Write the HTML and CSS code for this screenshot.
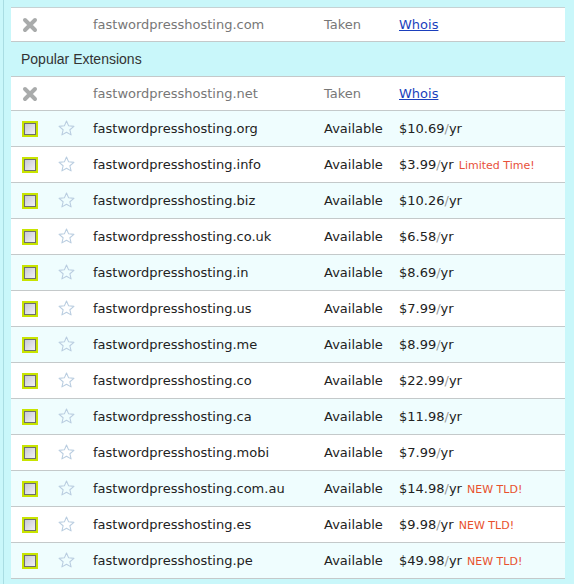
FILE: index.html
```html
<!DOCTYPE html>
<html lang="en">
<head>
  <meta charset="UTF-8">
  <title>Domain Results</title>
  <link rel="stylesheet" href="styles.css">
</head>
<body>
  <div class="frame">
    <table class="results">
      <tbody id="mainRows">
        <tr class="taken first">
          <td class="c-icon"><svg class="x-icon" viewBox="0 0 16 16"><path d="M3 3 L13 13 M13 3 L3 13"/></svg></td>
          <td class="c-star"></td>
          <td class="c-domain">fastwordpresshosting.com</td>
          <td class="c-status">Taken</td>
          <td class="c-price"><a href="#">Whois</a></td>
        </tr>
        <tr class="group">
          <td colspan="5">Popular Extensions</td>
        </tr>
        <tr class="taken second">
          <td class="c-icon"><svg class="x-icon" viewBox="0 0 16 16"><path d="M3 3 L13 13 M13 3 L3 13"/></svg></td>
          <td class="c-star"></td>
          <td class="c-domain">fastwordpresshosting.net</td>
          <td class="c-status">Taken</td>
          <td class="c-price"><a href="#">Whois</a></td>
        </tr>
      </tbody>
    </table>
  </div>

  <script>
    const available = [
      { tld: "org", price: "10.69" },
      { tld: "info", price: "3.99", note: "Limited Time!", cls: "limited" },
      { tld: "biz", price: "10.26" },
      { tld: "co.uk", price: "6.58" },
      { tld: "in", price: "8.69" },
      { tld: "us", price: "7.99" },
      { tld: "me", price: "8.99" },
      { tld: "co", price: "22.99" },
      { tld: "ca", price: "11.98" },
      { tld: "mobi", price: "7.99" },
      { tld: "com.au", price: "14.98", note: "NEW TLD!", cls: "newtld" },
      { tld: "es", price: "9.98", note: "NEW TLD!", cls: "newtld" },
      { tld: "pe", price: "49.98", note: "NEW TLD!", cls: "newtld" },
    ];

    const tbody = document.getElementById("mainRows");

    available.forEach((d, i) => {
      const row = document.createElement("tr");
      row.className = i % 2 === 0 ? "avail alt" : "avail";
      const note = d.note ? ` <span class="note ${d.cls}">${d.note}</span>` : "";
      row.innerHTML = `
        <td class="c-icon"><span class="check"><span class="box"></span></span></td>
        <td class="c-star">
          <svg class="star" viewBox="0 0 16 16"><path d="M8 1 L10 5.5 L15 6 L11.2 9.2 L12.3 14 L8 11.5 L3.7 14 L4.8 9.2 L1 6 L6 5.5 Z"/></svg>
        </td>
        <td class="c-domain">fastwordpresshosting.${d.tld}</td>
        <td class="c-status">Available</td>
        <td class="c-price">$${d.price}<span class="slash">/</span>yr${note}</td>
      `;
      tbody.appendChild(row);
    });
  </script>
</body>
</html>
```

FILE: styles.css
```css
body {
  margin: 0;
  background-color: #c9f7fa;
  font-family: "DejaVu Sans", Verdana, sans-serif;
  font-size: 13px;
  color: #222;
}
.frame {
  margin-left: 3px;
  border-left: 1px solid #a9dde3;
  padding: 7px 9px 6px 7px;
  min-height: 584px;
  box-sizing: border-box;
}
.results {
  width: 100%;
  border-collapse: collapse;
  border-top: 1px solid #c6d2d4;
}
.results td {
  height: 35px;
  padding: 0;
  border-bottom: 1px solid #c4c9ca;
  white-space: nowrap;
  vertical-align: middle;
}
.results tr.first td {
  height: 33px;
}
.results tr.second td {
  height: 33px;
}
.taken td {
  background: #fff;
  color: #777;
}
.avail td {
  background: #fff;
}
.avail.alt td {
  background: #effdfe;
}
.results .group td {
  background: #c9f7fa;
  height: 34px;
  padding-left: 10px;
  font-family: "Liberation Sans", Arial, sans-serif;
  font-size: 14px;
  color: #333;
}
.c-icon {
  width: 36px;
  padding-left: 11px !important;
}
.c-star {
  width: 35px;
}
.c-domain {
  width: 231px;
}
.c-status {
  width: 75px;
}
.c-price a {
  color: #1b3fbd;
  text-decoration: underline;
}
.x-icon {
  display: block;
  width: 16px;
  height: 16px;
}
.x-icon path {
  stroke: #a9abab;
  stroke-width: 4;
  stroke-linecap: round;
  fill: none;
}
.check {
  display: block;
  width: 12px;
  height: 12px;
  border: 2px solid #c8e400;
  background: #c8e400;
}
.check .box {
  display: block;
  width: 10px;
  height: 10px;
  border: 1px solid #6e6e6e;
  background: linear-gradient(135deg, #c9c9d6, #f0f0f4);
}
.star {
  display: block;
  width: 17px;
  height: 17px;
}
.star path {
  fill: none;
  stroke: #b9cde0;
  stroke-width: 1;
  stroke-linejoin: round;
}
.slash {
  color: #999;
}
.note {
  font-size: 11px;
  margin-left: 1px;
}
.limited {
  color: #e8503a;
}
.newtld {
  color: #e8502c;
}
```
